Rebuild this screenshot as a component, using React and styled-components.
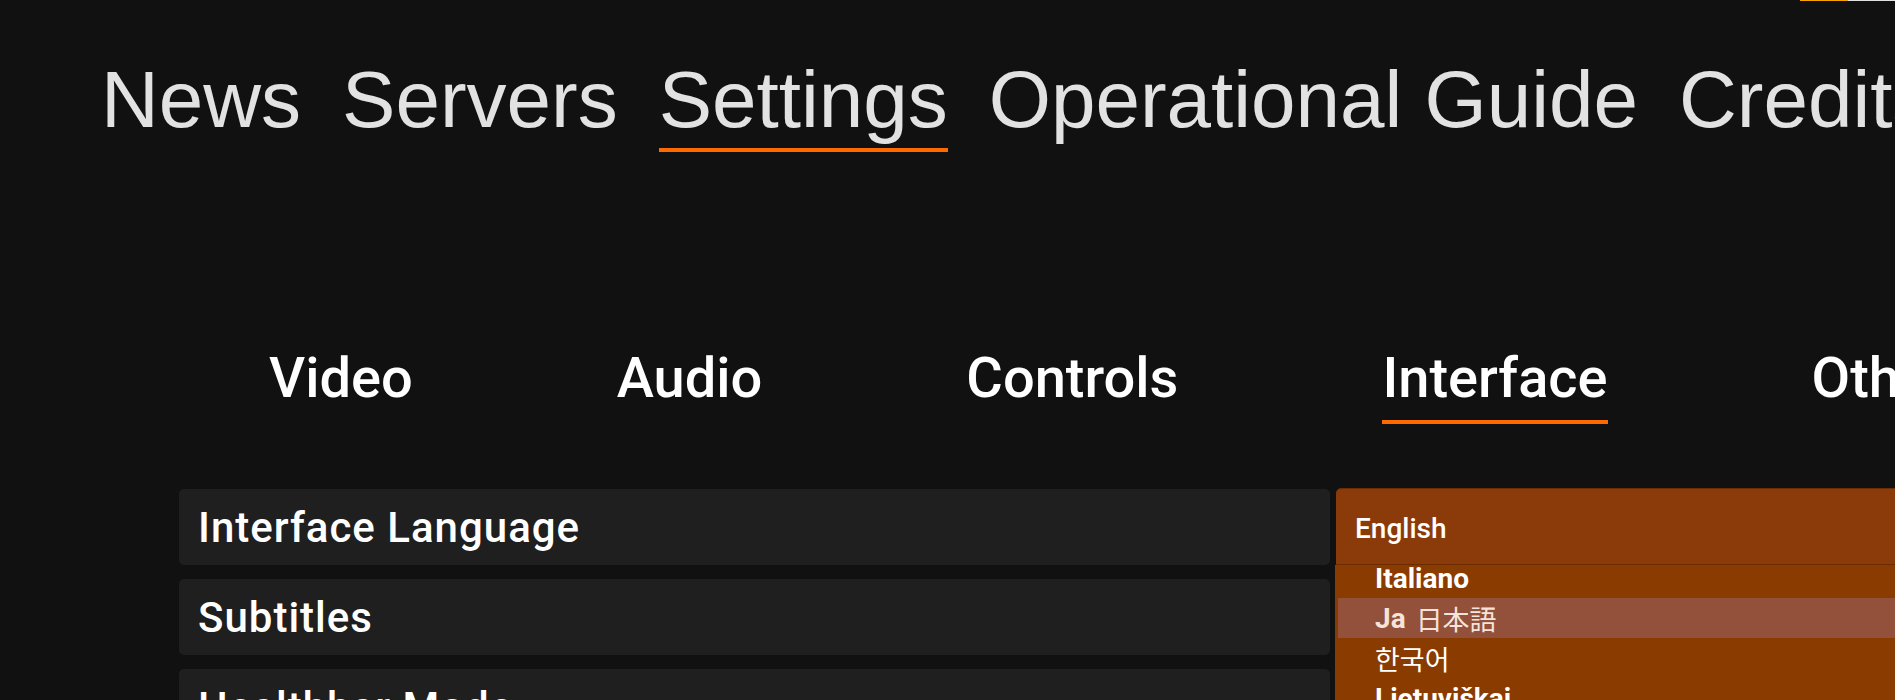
import React, { useLayoutEffect, useRef } from "react";
import styled, { createGlobalStyle } from "styled-components";

const GlobalStyle = createGlobalStyle`
  html, body {
    margin: 0;
    padding: 0;
    background-color: #111111;
    overflow: hidden;
  }
  * {
    box-sizing: border-box;
  }
`;

const Page = styled.div`
  width: 2600px;
  min-height: 100vh;
  background-color: #111111;
  font-family: "Roboto", "Noto Sans", sans-serif;
`;

const LoadBar = styled.div`
  position: fixed;
  top: 0;
  right: 0;
  width: 95px;
  height: 1px;
  display: flex;
  background-color: #e2e2e2;
`;

const LoadFill = styled.div`
  width: 48px;
  background-color: #f5a300;
`;

const MainNav = styled.nav`
  display: flex;
  gap: 41px;
  padding: 54px 0 0 101px;
  white-space: nowrap;
`;

const NavLink = styled.a`
  display: flex;
  flex-direction: column;
  font-family: "Liberation Sans", Arial, sans-serif;
  font-size: 80px;
  line-height: 92px;
  color: #e2e2e2;
  cursor: pointer;

  &::after {
    content: "";
    height: 4px;
    margin-top: 2px;
    background-color: ${(props) => (props.$active ? "#ff6a00" : "transparent")};
  }
`;

const TabBar = styled.div`
  display: flex;
  gap: 204px;
  margin-top: 194px;
  padding-left: 269px;
  white-space: nowrap;
`;

const Tab = styled.div`
  display: flex;
  flex-direction: column;
  font-size: 56px;
  font-weight: 500;
  line-height: 64px;
  color: #ffffff;
  cursor: pointer;

  &::after {
    content: "";
    height: 4px;
    margin-top: 10px;
    background-color: ${(props) => (props.$active ? "#ff6a00" : "transparent")};
  }
`;

const SettingsList = styled.div`
  display: flex;
  flex-direction: column;
  gap: 14px;
  margin: 65px 0 0 179px;
`;

const SettingRow = styled.div`
  display: grid;
  grid-template-columns: 1151px 1151px;
  gap: 6px;
  height: 76px;
`;

const Label = styled.div`
  display: flex;
  align-items: center;
  padding-left: 19px;
  background-color: #1f1f1f;
  border-radius: 5px;
  font-size: 42px;
  font-weight: 500;
  letter-spacing: 1px;
  color: #ffffff;
`;

const Control = styled.div`
  background-color: #1f1f1f;
  border-radius: 5px;
`;

const Dropdown = styled.div`
  position: relative;
  z-index: 5;
  height: 100%;
`;

const DropdownHead = styled.div`
  display: flex;
  align-items: center;
  height: 76px;
  padding: 3px 0 0 19px;
  background-color: #8b3a0a;
  border-radius: 5px 5px 0 0;
  border-bottom: 1px solid #6a2a02;
  box-shadow: 0 -1px 0 #6e2c05;
  font-size: 28px;
  font-weight: 500;
  color: #ffffff;
`;

const DropdownList = styled.ul`
  position: absolute;
  top: 76px;
  left: -1px;
  right: 0;
  height: 240px;
  margin: 0;
  padding: 0 0 0 3px;
  list-style: none;
  overflow: hidden;
  background-color: #8a3b00;
`;

const Option = styled.li`
  display: flex;
  align-items: center;
  gap: 10px;
  height: 40px;
  padding: 1px 0 0 37px;
  font-size: 28px;
  font-weight: 700;
  color: ${(props) => (props.$hover ? "#f4e4dc" : "#ffffff")};
  background-color: ${(props) => (props.$hover ? "#93503a" : "transparent")};
`;

const Native = styled.span`
  font-family: "Noto Sans CJK JP", "Noto Sans CJK KR", sans-serif;
  font-weight: 400;
  font-size: 27px;
`;

const navItems = ["News", "Servers", "Settings", "Operational Guide", "Credits"];
const tabs = ["Video", "Audio", "Controls", "Interface", "Others"];

const languages = [
  { name: "Italiano" },
  { code: "Ja", native: "日本語", hover: true },
  { native: "한국어" },
  { name: "Lietuviškai" },
  { name: "Polski" },
  { name: "Português" },
  { name: "Русский" },
];

function LanguageSelect() {
  const listRef = useRef(null);

  // the open list is scrolled down a little
  useLayoutEffect(() => {
    if (listRef.current) listRef.current.scrollTop = 7;
  }, []);

  return (
    <Dropdown>
      <DropdownHead>English</DropdownHead>
      <DropdownList ref={listRef}>
        {languages.map((lang, i) => (
          <Option key={i} $hover={lang.hover}>
            {lang.code && <span>{lang.code}</span>}
            {lang.name && <span>{lang.name}</span>}
            {lang.native && <Native>{lang.native}</Native>}
          </Option>
        ))}
      </DropdownList>
    </Dropdown>
  );
}

export default function App() {
  return (
    <>
      <GlobalStyle />
      <Page>
        <LoadBar>
          <LoadFill />
        </LoadBar>
        <MainNav>
          {navItems.map((item) => (
            <NavLink key={item} $active={item === "Settings"}>
              {item}
            </NavLink>
          ))}
        </MainNav>
        <TabBar>
          {tabs.map((tab) => (
            <Tab key={tab} $active={tab === "Interface"}>
              {tab}
            </Tab>
          ))}
        </TabBar>
        <SettingsList>
          <SettingRow>
            <Label>Interface Language</Label>
            <LanguageSelect />
          </SettingRow>
          <SettingRow>
            <Label>Subtitles</Label>
            <Control />
          </SettingRow>
          <SettingRow>
            <Label>Healthbar Mode</Label>
            <Control />
          </SettingRow>
        </SettingsList>
      </Page>
    </>
  );
}
